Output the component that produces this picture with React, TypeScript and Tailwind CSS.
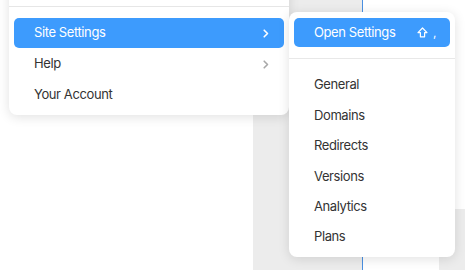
import React from 'react';

function Chevron({ className }: { className?: string }) {
  return (
    <svg width="6" height="9" viewBox="0 0 6 9" className={className} fill="none">
      <path d="M1.2 1.2L4.5 4.5L1.2 7.8" stroke="currentColor" strokeWidth="1.6" strokeLinecap="round" strokeLinejoin="round" />
    </svg>
  );
}

function ShiftIcon() {
  return (
    <svg width="11" height="11" viewBox="0 0 11 11" fill="none">
      <path
        d="M5.5 1L1 5.6H3.4V9.8H7.6V5.6H10L5.5 1Z"
        stroke="white"
        strokeWidth="1.2"
        strokeLinejoin="round"
      />
    </svg>
  );
}

const settingsItems = ['General', 'Domains', 'Redirects', 'Versions', 'Analytics', 'Plans'];

export default function App() {
  return (
    <div
      className="relative w-[465px] h-[270px] overflow-hidden bg-white text-[13px] tracking-[-0.4px] text-[#333333]"
      style={{ fontFamily: 'Inter, "Noto Sans", sans-serif' }}
    >
      {/* background canvas */}
      <div className="flex h-full">
        <div className="w-[253px] bg-white" />
        <div className="w-[110px] bg-[#ececec] border-r border-[#4a90e2]" />
        <div className="w-[76px] bg-white" />
        <div className="flex-1 flex flex-col">
          <div className="h-[209px] bg-white" />
          <div className="flex-1 bg-[#ececec]" />
        </div>
      </div>

      {/* main menu */}
      <div className="absolute left-[9px] top-[-20px] w-[280px] rounded-lg bg-white shadow-[0_2px_12px_rgba(0,0,0,0.12)]">
        <div className="h-[27px] border-b border-[#e6e6e6]" />
        <div className="px-[5px] pt-[11px] pb-[6px]">
          <div className="flex items-center justify-between h-[30px] rounded-[5px] bg-[#3d9bfd] pl-[20px] pr-[15px] text-white">
            <span>Site Settings</span>
            <Chevron className="text-white" />
          </div>
          <div className="flex items-center justify-between h-[31px] pt-px pl-[20px] pr-[15px]">
            <span>Help</span>
            <Chevron className="text-[#a8a8a8]" />
          </div>
          <div className="flex items-center h-[30px] pt-px pl-[20px] pr-[15px]">
            <span>Your Account</span>
          </div>
        </div>
      </div>

      {/* submenu */}
      <div className="absolute left-[289px] top-[12px] w-[166px] h-[245px] rounded-lg bg-white shadow-[0_2px_12px_rgba(0,0,0,0.12)]">
        <div className="px-[5px] pt-[6px] pb-[11px] border-b border-[#e8e8e8]">
          <div className="flex items-center justify-between h-[29px] rounded-[5px] bg-[#3d9bfd] pl-[20px] pr-[14px] text-white">
            <span>Open Settings</span>
            <span className="flex items-center gap-[5px]">
              <ShiftIcon />
              <span className="text-[12px] leading-none">,</span>
            </span>
          </div>
        </div>
        <div className="px-[5px] pt-[11px]">
          {settingsItems.map((item) => (
            <div key={item} className="flex items-center h-[30.4px] pl-[20px]">
              {item}
            </div>
          ))}
        </div>
      </div>
    </div>
  );
}
